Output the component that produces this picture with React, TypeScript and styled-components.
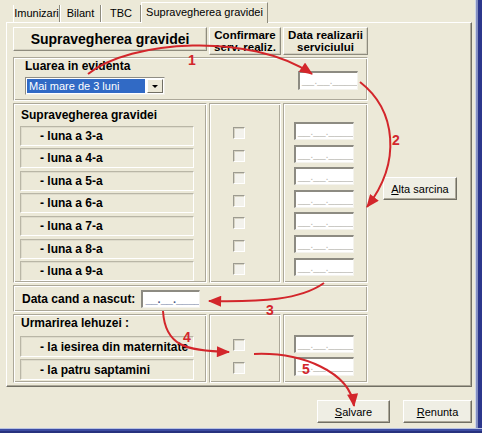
import React from 'react';
import styled, { createGlobalStyle } from 'styled-components';

const GlobalStyle = createGlobalStyle`
  html, body {
    margin: 0;
    padding: 0;
    background: #ECE9D8;
  }
  body {
    font-family: "Liberation Sans", Arial, sans-serif;
    color: #000;
  }
`;

const RED = '#d3262b';

const Window = styled.div`
  position: relative;
  width: 482px;
  height: 433px;
  display: flex;
  flex-direction: column;
  background: #ECE9D8;
  overflow: hidden;
`;

const Body = styled.div`
  flex: 1;
  display: flex;
  min-height: 0;
`;

const Content = styled.div`
  flex: 1;
  display: flex;
  flex-direction: column;
  padding-left: 6px;
`;

const RightFrame = styled.div`
  width: 8px;
  background: linear-gradient(to right, #ECE9D8 0 1px, #cdd5e8 1px 2px, #8590c2 2px 4px, #2c378c 4px);
`;

const BottomFrame = styled.div`
  height: 5px;
  background: linear-gradient(to bottom, #b9c3e1 0 1px, #3d4ca2 1px 3px, #27327e 3px);
`;

// tabs
const TabStrip = styled.div`
  height: 22px;
  display: flex;
  align-items: flex-end;
  padding-left: 7px;
`;

const Tab = styled.div<{ $w: number; $active?: boolean }>`
  position: relative;
  z-index: 1;
  box-sizing: border-box;
  width: ${(p) => p.$w}px;
  height: ${(p) => (p.$active ? 21 : 17)}px;
  line-height: ${(p) => (p.$active ? 19 : 17)}px;
  margin-bottom: ${(p) => (p.$active ? -1 : 0)}px;
  text-align: center;
  font-size: 11px;
  background: #ECE9D8;
  border-left: 1px solid #fff;
  border-right: 1px solid #8e8b7d;
  border-top: ${(p) => (p.$active ? '1px solid #fff' : 'none')};
`;

const TabPanel = styled.div`
  box-sizing: border-box;
  height: 365px;
  margin-right: 2px;
  border: 1px solid;
  border-color: #fff #716f64 #716f64 #fff;
  box-shadow: inset -1px -1px #aca899;
  padding: 4px 0 0 6px;
  display: flex;
  align-items: flex-start;
  gap: 15px;
`;

// form grid
const FormGrid = styled.div`
  display: grid;
  grid-template-columns: 194px 72px 85px;
  grid-template-rows: 28px 44px 180px 27px 69px;
  gap: 2px;
`;

const HeaderCell = styled.div<{ $big?: boolean }>`
  box-sizing: border-box;
  align-self: start;
  height: ${(p) => (p.$big ? 24 : 28)}px;
  display: flex;
  align-items: center;
  justify-content: center;
  text-align: center;
  font-weight: bold;
  font-size: ${(p) => (p.$big ? 14 : 11.5)}px;
  line-height: 12px;
  border: 1px solid;
  border-color: #fff #8e8b7d #8e8b7d #fff;
  box-shadow: inset -1px -1px #d2cfbf;
`;

const Cell = styled.div`
  box-sizing: border-box;
  border: 1px solid;
  border-color: #aca899 #fff #fff #aca899;
  box-shadow: inset 1px 1px #fff, inset -1px -1px #aca899;
`;

const SpanCell = styled(Cell)`
  grid-column: 1 / -1;
  display: flex;
`;

const StackCell = styled(Cell)<{ $top: number; $gap: number }>`
  display: flex;
  flex-direction: column;
  gap: ${(p) => p.$gap}px;
  padding-top: ${(p) => p.$top}px;
`;

const SectionTitle = styled.div<{ $pt: number }>`
  height: 16px;
  padding-top: ${(p) => p.$pt}px;
  padding-left: 7px;
  font-weight: bold;
  font-size: 12px;
  line-height: 16px;
  margin-bottom: ${(p) => 3 - p.$pt}px;
`;

const LabelBox = styled.div<{ $h: number }>`
  box-sizing: border-box;
  height: ${(p) => p.$h}px;
  margin: 0 12px 0 6px;
  padding-left: 19px;
  display: flex;
  align-items: center;
  font-weight: bold;
  font-size: 12px;
  white-space: nowrap;
  border: 1px solid;
  border-color: #b9b6a6 #fff #fff #b9b6a6;
  box-shadow: inset 1px 1px #dedbcb;
`;

const CheckRow = styled.div<{ $h: number }>`
  height: ${(p) => p.$h}px;
  display: flex;
  align-items: center;
  padding-left: 23px;
`;

const Check = styled.span`
  box-sizing: border-box;
  width: 12px;
  height: 12px;
  background: #f3f2ec;
  border: 1px solid;
  border-color: #9d9b90 #fff #fff #9d9b90;
  box-shadow: inset 1px 1px #d6d3c4;
`;

const DateInput = styled.div<{ $h?: number; $dark?: boolean }>`
  box-sizing: border-box;
  width: ${(p) => (p.$dark ? 59 : 60)}px;
  height: ${(p) => p.$h ?? 18}px;
  flex-shrink: 0;
  background: #fff;
  border-style: solid;
  border-width: 2px 1px 1px 2px;
  border-color: #8d8b82 #f4f3ee #f4f3ee #8d8b82;
  padding: 0 0 0 2px;
  font-size: 11px;
  line-height: 14px;
  color: ${(p) => (p.$dark ? '#4a5a86' : '#bdbcb6')};
  overflow: hidden;
  white-space: nowrap;
`;

const InputCol = styled(StackCell)`
  padding-left: 10px;
`;

const LeftGroup = styled.div`
  display: flex;
  flex-direction: column;
  gap: 4px;
  padding: 1px 0 0 11px;
  flex: 1;
`;

const PlainTitle = styled.div`
  font-weight: bold;
  font-size: 12px;
  line-height: 14px;
`;

const Select = styled.div`
  box-sizing: border-box;
  width: 140px;
  height: 18px;
  display: flex;
  background: #fff;
  border: 1px solid;
  border-color: #8f8d84 #f1efe6 #f1efe6 #8f8d84;
  padding: 1px;
`;

const SelectValue = styled.div`
  flex: 1;
  background: #316ac5;
  color: #fff;
  font-size: 11px;
  line-height: 14px;
  padding-left: 2px;
  white-space: nowrap;
`;

const SelectArrow = styled.div`
  box-sizing: border-box;
  width: 16px;
  margin-left: 2px;
  display: flex;
  align-items: center;
  justify-content: center;
  background: #ECE9D8;
  border: 1px solid;
  border-color: #fff #716f64 #716f64 #fff;

  &::after {
    content: '';
    border-left: 3px solid transparent;
    border-right: 3px solid transparent;
    border-top: 3px solid #000;
  }
`;

const RowInput = styled(DateInput)`
  align-self: flex-start;
  margin: 13px 9px 0 0;
`;

const BornRow = styled(SpanCell)`
  align-items: center;
  gap: 6px;
  padding-left: 8px;
  font-weight: bold;
  font-size: 12px;
`;

const Button = styled.button<{ $w: number }>`
  box-sizing: border-box;
  width: ${(p) => p.$w}px;
  height: 23px;
  padding: 0;
  font: 11px "Liberation Sans", Arial, sans-serif;
  color: #000;
  background: #efeee4;
  border: 1px solid;
  border-color: #fff #716f64 #716f64 #fff;
  box-shadow: inset -1px -1px #aca899;
  flex-shrink: 0;
`;

const SideButton = styled(Button)`
  margin-top: 150px;
`;

const ButtonRow = styled.div`
  margin-top: 13px;
  display: flex;
  justify-content: flex-end;
  gap: 13px;
  padding-right: 2px;
`;

const Overlay = styled.svg`
  position: absolute;
  left: 0;
  top: 0;
  pointer-events: none;
`;

const months = ['3', '4', '5', '6', '7', '8', '9'];
const EMPTY_DATE = '__.__.____';

const arrows = [
  'M 88 74 C 130 40, 250 32, 312 74',
  'M 360 82 C 396 110, 402 162, 367 207',
  'M 324 283 C 300 300, 262 302, 209 301',
  'M 163 311 C 165 346, 186 351, 229 352',
  'M 254 354 C 302 352, 350 372, 354 406',
];

const labels: [string, number, number][] = [
  ['1', 192, 65],
  ['2', 396, 145],
  ['3', 270, 315],
  ['4', 187, 342],
  ['5', 306, 374],
];

function Annotations() {
  return (
    <Overlay width={482} height={433} viewBox="0 0 482 433">
      <defs>
        <marker
          id="head"
          viewBox="0 0 12 10"
          refX="11"
          refY="5"
          markerWidth="14"
          markerHeight="11"
          markerUnits="userSpaceOnUse"
          orient="auto"
        >
          <path d="M0,0 L12,5 L0,10 z" fill={RED} />
        </marker>
      </defs>
      {arrows.map((d) => (
        <path key={d} d={d} fill="none" stroke={RED} strokeWidth={2} markerEnd="url(#head)" />
      ))}
      {labels.map(([t, x, y]) => (
        <text
          key={t}
          x={x}
          y={y}
          fill={RED}
          fontSize={14}
          fontWeight="bold"
          textAnchor="middle"
          fontFamily='"Liberation Sans", Arial, sans-serif'
        >
          {t}
        </text>
      ))}
    </Overlay>
  );
}

export default function App() {
  return (
    <Window>
      <GlobalStyle />
      <Body>
        <Content>
          <TabStrip>
            <Tab $w={47}>Imunizari</Tab>
            <Tab $w={41}>Bilant</Tab>
            <Tab $w={40}>TBC</Tab>
            <Tab $w={127} $active>Supravegherea gravidei</Tab>
          </TabStrip>

          <TabPanel>
            <FormGrid>
              <HeaderCell $big>Supravegherea gravidei</HeaderCell>
              <HeaderCell>Confirmare<br />serv. realiz.</HeaderCell>
              <HeaderCell>Data realizarii<br />serviciului</HeaderCell>

              <SpanCell>
                <LeftGroup>
                  <PlainTitle>Luarea in evidenta</PlainTitle>
                  <Select>
                    <SelectValue>Mai mare de 3 luni</SelectValue>
                    <SelectArrow />
                  </Select>
                </LeftGroup>
                <RowInput $h={19}>{EMPTY_DATE}</RowInput>
              </SpanCell>

              <StackCell $top={0} $gap={2.6}>
                <SectionTitle $pt={3}>Supravegherea gravidei</SectionTitle>
                {months.map((m) => (
                  <LabelBox key={m} $h={20}>- luna a {m}-a</LabelBox>
                ))}
              </StackCell>
              <StackCell $top={19} $gap={2.6}>
                {months.map((m) => (
                  <CheckRow key={m} $h={20}><Check /></CheckRow>
                ))}
              </StackCell>
              <InputCol $top={18} $gap={4.6}>
                {months.map((m) => (
                  <DateInput key={m}>{EMPTY_DATE}</DateInput>
                ))}
              </InputCol>

              <BornRow>
                Data cand a nascut:
                <DateInput $dark>{EMPTY_DATE}</DateInput>
              </BornRow>

              <StackCell $top={0} $gap={2}>
                <SectionTitle $pt={0}>Urmarirea lehuzei :</SectionTitle>
                <LabelBox $h={21}>- la iesirea din maternitate</LabelBox>
                <LabelBox $h={21}>- la patru saptamini</LabelBox>
              </StackCell>
              <StackCell $top={19} $gap={2}>
                <CheckRow $h={21}><Check /></CheckRow>
                <CheckRow $h={21}><Check /></CheckRow>
              </StackCell>
              <InputCol $top={20} $gap={4}>
                <DateInput>{EMPTY_DATE}</DateInput>
                <DateInput $h={19}>{EMPTY_DATE}</DateInput>
              </InputCol>
            </FormGrid>

            <SideButton $w={74}><u>A</u>lta sarcina</SideButton>
          </TabPanel>

          <ButtonRow>
            <Button $w={73}><u>S</u>alvare</Button>
            <Button $w={69}><u>R</u>enunta</Button>
          </ButtonRow>
        </Content>
        <RightFrame />
      </Body>
      <BottomFrame />
      <Annotations />
    </Window>
  );
}
